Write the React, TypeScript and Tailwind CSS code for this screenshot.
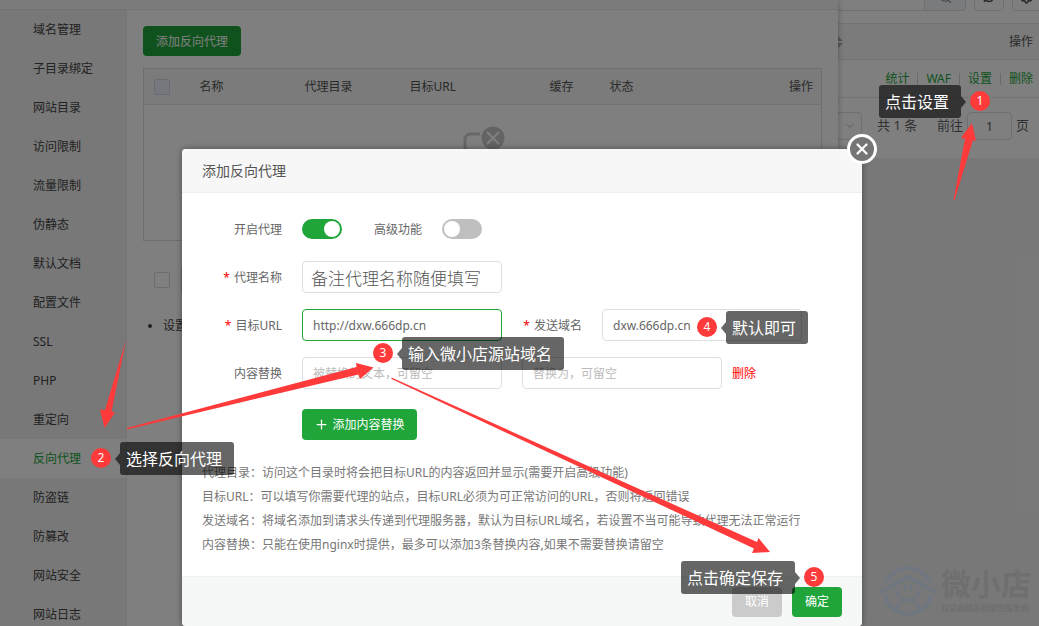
import { useState } from 'react';
import { ChevronDown, Plus, RefreshCw, Search, Settings, X } from 'lucide-react';
import clsx from 'clsx';

const menu = [
  '域名管理',
  '子目录绑定',
  '网站目录',
  '访问限制',
  '流量限制',
  '伪静态',
  '默认文档',
  '配置文件',
  'SSL',
  'PHP',
  '重定向',
  '反向代理',
  '防盗链',
  '防篡改',
  '网站安全',
  '网站日志',
];

const tips = [
  '代理目录：访问这个目录时将会把目标URL的内容返回并显示(需要开启高级功能)',
  '目标URL：可以填写你需要代理的站点，目标URL必须为可正常访问的URL，否则将返回错误',
  '发送域名：将域名添加到请求头传递到代理服务器，默认为目标URL域名，若设置不当可能导致代理无法正常运行',
  '内容替换：只能在使用nginx时提供，最多可以添加3条替换内容,如果不需要替换请留空',
];

const inputClass =
  'h-8 w-[200px] shrink-0 rounded border border-[#dcdfe6] bg-white px-2.5 text-xs text-[#666] outline-none placeholder:text-[#bbb]';

function Switch({ id, on, onChange }: { id: string; on: boolean; onChange: (v: boolean) => void }) {
  return (
    <input
      id={id}
      type="checkbox"
      role="switch"
      checked={on}
      onChange={(e) => onChange(e.target.checked)}
      className="flex h-5 w-10 shrink-0 cursor-pointer appearance-none items-center rounded-full bg-[#bfbfbf] px-0.5 before:size-4 before:rounded-full before:bg-white checked:justify-end checked:bg-[#20a53a]"
    />
  );
}

function FieldLabel({ htmlFor, required, children }: { htmlFor: string; required?: boolean; children: string }) {
  return (
    <label htmlFor={htmlFor} className="mr-5 w-20 shrink-0 pt-0.5 text-right text-[#666]">
      {required && <span className="mr-1 text-[#f00]">*</span>}
      {children}
    </label>
  );
}

function Sidebar() {
  return (
    <nav className="w-[127px] shrink-0 border-r border-[#ebebeb] bg-[#f0f0f0]">
      {menu.map((item) => (
        <a
          key={item}
          href="#"
          className={clsx(
            'flex h-[39px] items-center pl-[33px]',
            item === '反向代理' ? 'bg-white text-[#20a53a]' : 'text-[#444]'
          )}
        >
          {item}
        </a>
      ))}
    </nav>
  );
}

function ProxyList() {
  return (
    <main className="min-w-0 flex-1 p-4">
      <button className="h-[30px] w-[98px] rounded bg-[#20a53a] pt-px text-xs text-white">添加反向代理</button>
      <table className="mt-3 w-full table-fixed border border-[#dcdcdc] text-left text-[#555]">
        <thead>
          <tr className="h-9 border-b border-[#e6e6e6] bg-[#f6f6f6]">
            <th className="w-[46px] pl-2.5">
              <input
                type="checkbox"
                aria-label="全选"
                className="block size-4 appearance-none rounded-xs border border-[#d3d7e4] bg-[#edf0fa]"
              />
            </th>
            <th className="w-[105px] pl-2.5 font-normal">名称</th>
            <th className="w-[105px] pl-2.5 font-normal">代理目录</th>
            <th className="w-[140px] pl-2.5 font-normal">目标URL</th>
            <th className="w-[60px] pl-2.5 font-normal">缓存</th>
            <th className="pl-2.5 font-normal">状态</th>
            <th className="w-20 pr-2 text-right font-normal">操作</th>
          </tr>
        </thead>
        <tbody>
          <tr className="h-[136px]">
            <td colSpan={7} className="pt-[18px] pl-0.5 align-top">
              <svg width="44" height="60" viewBox="0 0 44 60" fill="none" className="mx-auto">
                <path d="M18 11H8a5 5 0 0 0-5 5v36a5 5 0 0 0 5 5h28a5 5 0 0 0 5-5V30" stroke="#cfcfcf" strokeWidth="3" />
                <circle cx="31" cy="15" r="11.5" fill="#c9c9c9" />
                <path d="m25 9 12 12M37 9 25 21" stroke="#fff" strokeWidth="2" />
              </svg>
            </td>
          </tr>
        </tbody>
      </table>
      <div className="mt-[27px] flex items-center gap-[11px] pl-[11px]">
        <input
          type="checkbox"
          aria-label="选择全部"
          className="size-4 appearance-none rounded-xs border border-[#d9d9d9] bg-white"
        />
        <select aria-label="批量操作" className="h-6 w-28 appearance-none rounded-xs border border-[#d9d9d9] px-2 text-[#888]" />
      </div>
      <ul className="mt-[25px] list-disc pl-5 leading-[18px] text-[#444]">
        <li>设置</li>
      </ul>
    </main>
  );
}

function SiteTable() {
  return (
    <aside className="w-[201px] shrink-0 bg-[#f1f1f1]">
      <div className="h-[158px] overflow-hidden bg-white">
        <div className="flex h-[11px] items-end justify-between">
          <div className="flex">
            <span className="h-7 w-[86px] border-b border-[#dcdfe6]" />
            <button
              aria-label="搜索"
              className="flex h-7 w-[42px] items-center justify-center rounded-r border border-[#dcdfe6] bg-[#f5f7fa] text-[#888]"
            >
              <Search size={13} />
            </button>
          </div>
          <button aria-label="刷新" className="flex h-7 w-[30px] items-center justify-center rounded border border-[#dcdfe6] text-[#555]">
            <RefreshCw size={12} strokeWidth={3} />
          </button>
          <button aria-label="列设置" className="flex h-7 w-[27px] items-center justify-center rounded-l border border-r-0 border-[#dcdfe6] text-[#555]">
            <Settings size={13} strokeWidth={3} />
          </button>
        </div>
        <div className="mt-3 flex h-[37px] items-center justify-between border-y border-[#e4e4e4] bg-[#f6f6f6] pr-1.5 text-[#555]">
          <svg width="5" height="12" viewBox="0 0 5 12" fill="#aaa">
            <path d="M0 0 5 5H0zM0 7h5l-5 5z" />
          </svg>
          操作
        </div>
        <div className="flex h-[38px] items-center justify-end gap-2 border-b border-[#e8e8e8] pr-1.5 text-[#20a53a]">
          <a href="#">统计</a>
          <span className="h-3 w-px bg-[#d5d5d5]" />
          <a href="#">WAF</a>
          <span className="h-3 w-px bg-[#d5d5d5]" />
          <a href="#">设置</a>
          <span className="h-3 w-px bg-[#d5d5d5]" />
          <a href="#">删除</a>
        </div>
        <div className="mt-3.5 flex items-center text-[13px] text-[#606266]">
          <span className="flex h-7 w-6 items-center justify-center rounded-r border border-l-0 border-[#dcdfe6] text-[#bbb]">
            <ChevronDown size={12} />
          </span>
          <span className="ml-[15px] whitespace-nowrap">共 1 条</span>
          <label htmlFor="page" className="ml-auto">
            前往
          </label>
          <input id="page" defaultValue="1" className="mx-1 h-7 w-[45px] rounded border border-[#dcdfe6] text-center outline-none" />
          <span className="mr-2.5">页</span>
        </div>
      </div>
    </aside>
  );
}

function ProxyDialog() {
  const [enabled, setEnabled] = useState(true);
  const [advanced, setAdvanced] = useState(false);

  return (
    <div role="dialog" aria-label="添加反向代理" className="relative w-[680px] rounded bg-white shadow-[0_0_6px_rgba(0,0,0,0.4)]">
      <h2 className="h-11 rounded-t border-b border-[#eee] bg-[#f7f7f7] px-5 text-sm leading-[43px] text-[#555]">添加反向代理</h2>
      <button
        aria-label="关闭"
        className="absolute -top-[15px] -right-[15px] flex size-[30px] items-center justify-center rounded-full border-3 border-white bg-[#757575] text-white"
      >
        <X size={18} strokeWidth={3} />
      </button>

      <form className="px-5 pt-5 pb-[19px]" onSubmit={(e) => e.preventDefault()}>
        <div className="flex flex-col gap-4">
          <div className="flex h-8 items-center">
            <FieldLabel htmlFor="enabled">开启代理</FieldLabel>
            <Switch id="enabled" on={enabled} onChange={setEnabled} />
            <FieldLabel htmlFor="advanced">高级功能</FieldLabel>
            <Switch id="advanced" on={advanced} onChange={setAdvanced} />
          </div>
          <div className="flex items-center">
            <FieldLabel htmlFor="name" required>代理名称</FieldLabel>
            <input
              id="name"
              defaultValue="备注代理名称随便填写"
              className="h-8 w-[200px] rounded border border-[#dcdfe6] px-2 font-light text-[17px] text-[#555] outline-none"
            />
          </div>
          <div className="flex items-center">
            <FieldLabel htmlFor="target" required>目标URL</FieldLabel>
            <input
              id="target"
              defaultValue="http://dxw.666dp.cn"
              className="h-8 w-[200px] rounded border border-[#20a53a] px-2.5 text-xs text-[#666] outline-none"
            />
            <FieldLabel htmlFor="host" required>发送域名</FieldLabel>
            <input id="host" defaultValue="dxw.666dp.cn" className={inputClass} />
          </div>
          <div className="flex items-center">
            <FieldLabel htmlFor="from">内容替换</FieldLabel>
            <input id="from" placeholder="被替换的文本，可留空" className={inputClass} />
            <input aria-label="替换为" placeholder="替换为，可留空" className={clsx(inputClass, 'mx-5')} />
            <a href="#" className="-ml-2.5 pt-0.5 text-[#f00]">删除</a>
          </div>
        </div>
        <button className="mt-5 ml-[100px] flex h-[31px] w-[115px] items-center justify-center gap-[3px] rounded bg-[#20a53a] text-xs text-white">
          <Plus size={15} strokeWidth={2} />
          添加内容替换
        </button>
        <ul className="mt-[21px] leading-6 whitespace-nowrap text-[#777]">
          {tips.map((tip) => (
            <li key={tip}>{tip}</li>
          ))}
        </ul>
      </form>

      <footer className="flex h-[50px] items-center justify-end gap-2.5 rounded-b border-t border-[#edf1f0] bg-[#f6f8f8] px-5">
        <button className="h-[30px] w-[50px] rounded bg-[#cbcbcb] pt-px text-xs text-white">取消</button>
        <button className="h-[30px] w-[50px] rounded bg-[#20a53a] pt-px text-xs text-white">确定</button>
      </footer>
    </div>
  );
}

// Numbered marker with its dark label; `side` is where the label stands
function Callout({ step, text, side, className }: { step: number; text: string; side: 'left' | 'right'; className: string }) {
  return (
    <div className={clsx('absolute flex items-center', side === 'left' && 'flex-row-reverse', className)}>
      <span className="mb-0.5 flex size-5 items-center justify-center rounded-full bg-[#fe3a3a] text-xs text-white">{step}</span>
      <svg
        width="5"
        height="12"
        viewBox="0 0 5 12"
        className={side === 'left' ? 'mr-1' : 'ml-1'}
        fill="#000"
        fillOpacity="0.6"
      >
        <path d={side === 'left' ? 'M0 0 5 6 0 12z' : 'M5 0 0 6l5 6z'} />
      </svg>
      <span className="h-[33px] rounded-[3px] bg-black/60 pr-3 pl-1.5 text-base leading-[35px] whitespace-nowrap text-white">
        {text}
      </span>
    </div>
  );
}

function Arrows() {
  return (
    <svg width="1039" height="626" viewBox="0 0 1039 626" fill="#fe3a3a" className="absolute top-0 left-0">
      <path d="M953.5 200 965 138.500 961 138 972 123 976 141 973 140 954.500 200z" />
      <path d="M126 340 105 410 100 409.500 104.500 428 115 412.500 111.500 411.500z" />
      <path d="M127 428 356.500 367 356 363 373.500 367.500 360 379 358.500 374.500 127 429.500z" />
      <path d="M391.500 377.500 757 542 758.500 538 770 552 752 553 754 548.500 391.500 379z" />
    </svg>
  );
}

function Watermark() {
  return (
    <div className="absolute right-2 bottom-2 flex items-center gap-[3px] text-[#6f6f6f]">
      <svg width="60" height="56" viewBox="0 0 60 56" fill="none" stroke="#707780" strokeWidth="4">
        <path d="M8 22a23 23 0 0 1 44 0" />
        <path d="M7 33a23.500 23.500 0 0 0 46 0" />
        <path d="M2 30 30 15l28 15" />
        <path d="M18 27a12 12 0 0 0 24 0" strokeWidth="3" />
        <path d="M18 49a12 12 0 0 1 24 0" strokeWidth="3" />
        <path d="M27 22v7M33 22v7M26 25h8" strokeWidth="2" />
      </svg>
      <div className="flex flex-col">
        <span className="text-3xl leading-9 font-bold">微小店</span>
        <span className="text-[8px] leading-3 font-bold">权益商城系统提供服务商</span>
      </div>
    </div>
  );
}

export default function App() {
  return (
    <div className="relative h-screen overflow-hidden bg-white font-['Noto_Sans','Noto_Sans_CJK_SC',sans-serif] text-xs">
      <div className="flex h-full">
        <section className="relative flex min-w-0 flex-1 flex-col bg-white shadow-[0_0_6px_rgba(0,0,0,0.3)]">
          <div className="h-2.5 shrink-0 border-b border-[#e6e6e6] bg-[#f7f7f7]" />
          <div className="flex min-h-0 flex-1">
            <Sidebar />
            <ProxyList />
          </div>
        </section>
        <SiteTable />
      </div>

      <div className="absolute inset-0 flex items-end justify-center bg-black/50 pl-[5px]">
        <ProxyDialog />
      </div>

      <Watermark />

      <div className="pointer-events-none absolute inset-0">
        <Callout step={1} text="点击设置" side="left" className="top-[85px] left-[879px]" />
        <Callout step={2} text="选择反向代理" side="right" className="top-[442px] left-[91px]" />
        <Callout step={3} text="输入微小店源站域名" side="right" className="top-[337px] left-[373px]" />
        <Callout step={4} text="默认即可" side="right" className="top-[311px] left-[697px]" />
        <Callout step={5} text="点击确定保存" side="left" className="top-[561px] left-[681px]" />
        <Arrows />
      </div>
    </div>
  );
}
